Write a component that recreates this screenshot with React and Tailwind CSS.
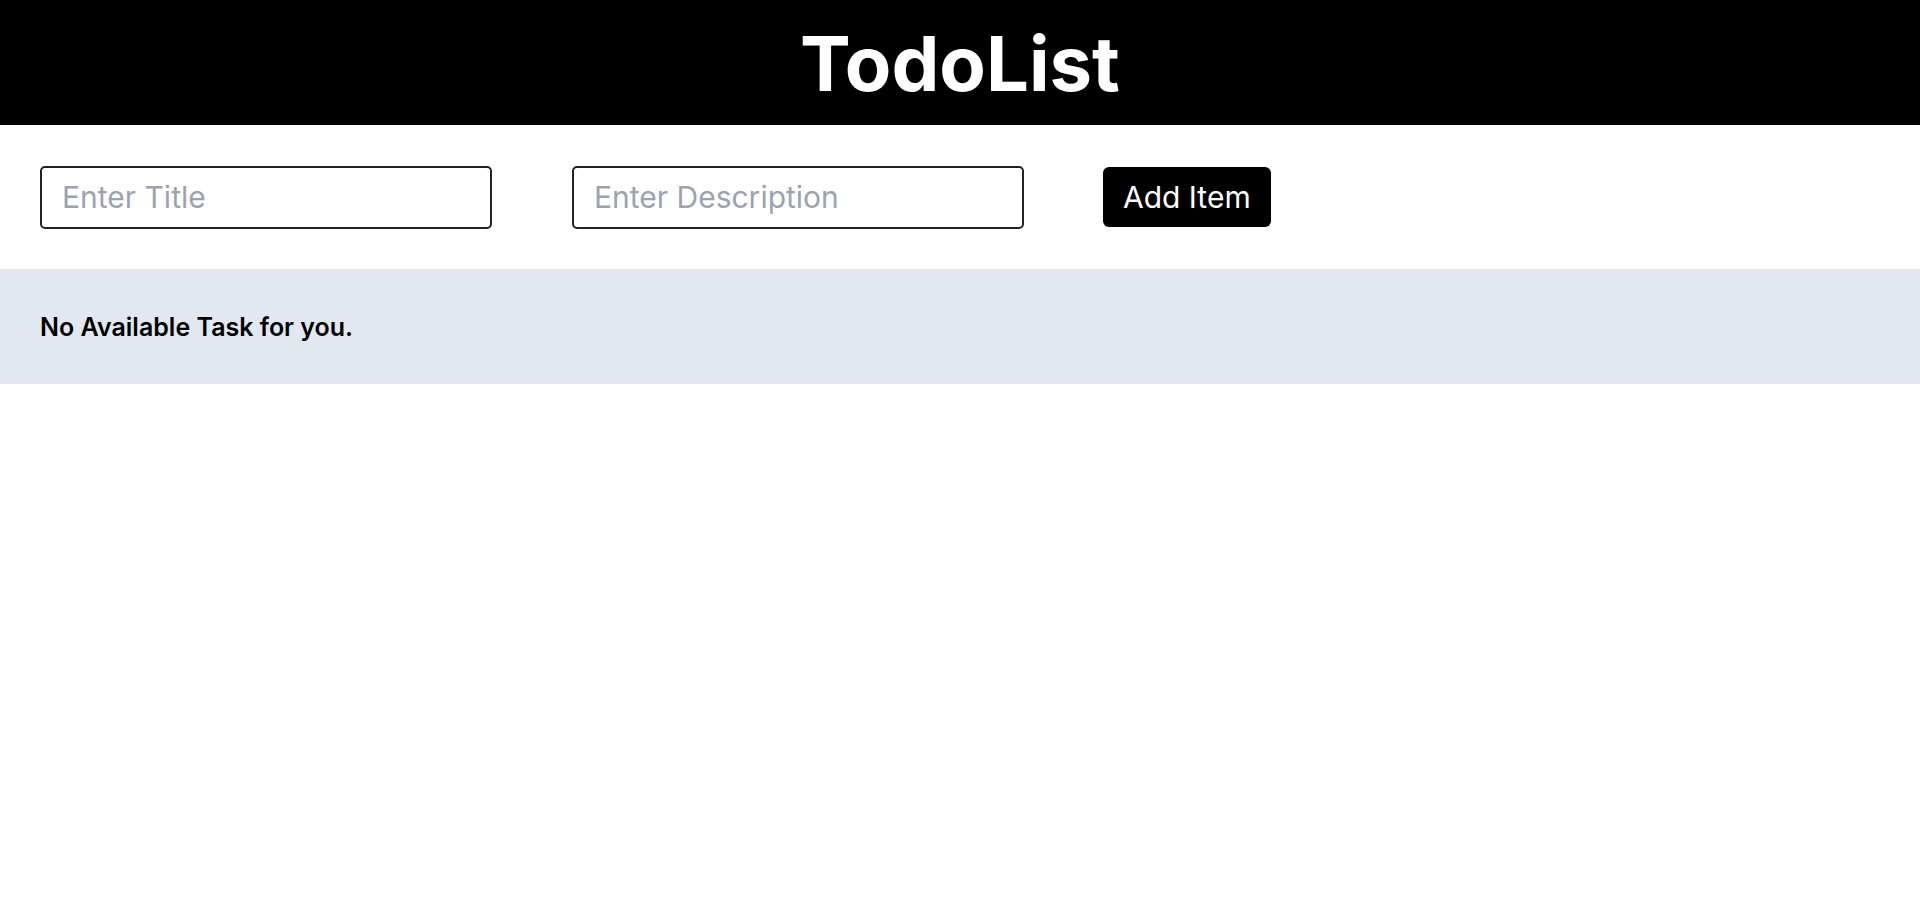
export default function App() {
  return (
    <div className="min-h-screen bg-white" style={{ fontFamily: "Inter, 'Noto Sans', sans-serif" }}>
      <header className="h-[125px] bg-black flex items-center justify-center">
        <h1 className="text-white font-bold text-[76px] leading-none">TodoList</h1>
      </header>
      <div className="h-[144px] flex items-center px-10">
        <input
          type="text"
          placeholder="Enter Title"
          className="w-[452px] h-[63px] border-2 border-[#222] rounded-[5px] px-[20px] text-[30px] placeholder:text-[#9ca3af] outline-none"
        />
        <input
          type="text"
          placeholder="Enter Description"
          className="ml-[80px] w-[452px] h-[63px] border-2 border-[#222] rounded-[5px] px-[20px] text-[30px] placeholder:text-[#9ca3af] outline-none"
        />
        <button className="ml-[79px] h-[60px] px-[20px] bg-black text-white text-[30px] rounded-[6px]">Add Item</button>
      </div>
      <div className="h-[115px] bg-[#e2e8f0] flex items-center px-10">
        <p className="text-[25px] font-semibold text-black pt-[2px]">No Available Task for you.</p>
      </div>
    </div>
  );
}
